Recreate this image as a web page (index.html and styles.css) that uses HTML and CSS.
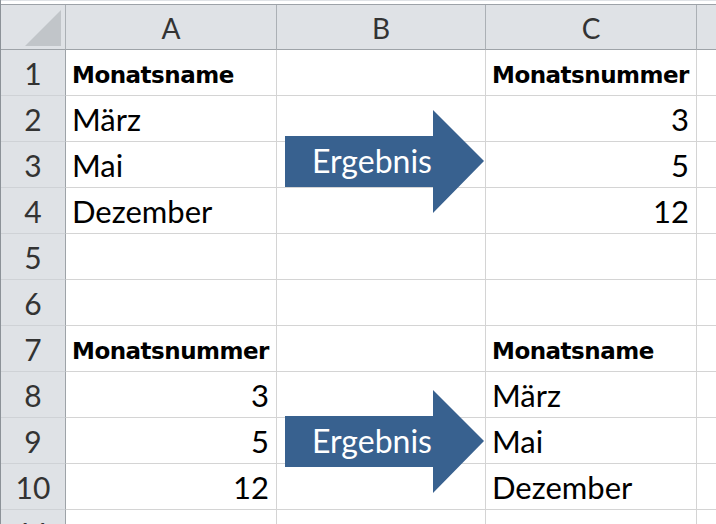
FILE: index.html
```html
<!DOCTYPE html>
<html lang="de">
<head>
<meta charset="utf-8">
<title>Monatsname / Monatsnummer</title>
<link rel="stylesheet" href="styles.css">
</head>
<body>
<div class="sheet">
  <div class="topstrip"></div>
  <div class="grid">
    <div class="corner"><span class="tri"></span></div>
    <div class="colhead">A</div>
    <div class="colhead">B</div>
    <div class="colhead">C</div>
    <div class="colhead last"></div>

    <div class="rowhead">1</div>
    <div class="cell bold">Monatsname</div>
    <div class="cell"></div>
    <div class="cell bold">Monatsnummer</div>
    <div class="cell"></div>

    <div class="rowhead">2</div>
    <div class="cell">März</div>
    <div class="cell"></div>
    <div class="cell num">3</div>
    <div class="cell"></div>

    <div class="rowhead">3</div>
    <div class="cell">Mai</div>
    <div class="cell"></div>
    <div class="cell num">5</div>
    <div class="cell"></div>

    <div class="rowhead">4</div>
    <div class="cell">Dezember</div>
    <div class="cell"></div>
    <div class="cell num">12</div>
    <div class="cell"></div>

    <div class="rowhead">5</div>
    <div class="cell"></div>
    <div class="cell"></div>
    <div class="cell"></div>
    <div class="cell"></div>

    <div class="rowhead">6</div>
    <div class="cell"></div>
    <div class="cell"></div>
    <div class="cell"></div>
    <div class="cell"></div>

    <div class="rowhead">7</div>
    <div class="cell bold">Monatsnummer</div>
    <div class="cell"></div>
    <div class="cell bold">Monatsname</div>
    <div class="cell"></div>

    <div class="rowhead">8</div>
    <div class="cell num">3</div>
    <div class="cell"></div>
    <div class="cell">März</div>
    <div class="cell"></div>

    <div class="rowhead">9</div>
    <div class="cell num">5</div>
    <div class="cell"></div>
    <div class="cell">Mai</div>
    <div class="cell"></div>

    <div class="rowhead">10</div>
    <div class="cell num">12</div>
    <div class="cell"></div>
    <div class="cell">Dezember</div>
    <div class="cell"></div>

    <div class="rowhead">11</div>
    <div class="cell"></div>
    <div class="cell"></div>
    <div class="cell"></div>
    <div class="cell"></div>
  </div>

  <div class="arrow arrow-top">
    <svg class="arrow-shape" width="200" height="104" viewBox="0 0 200 104">
      <polygon points="0,26 148,26 148,0 199,51 148,103 148,77 0,77"/>
    </svg>
    <span class="arrow-label">Ergebnis</span>
  </div>
  <div class="arrow arrow-bottom">
    <svg class="arrow-shape" width="200" height="104" viewBox="0 0 200 104">
      <polygon points="0,26 148,26 148,0 199,51 148,103 148,77 0,77"/>
    </svg>
    <span class="arrow-label">Ergebnis</span>
  </div>
</div>
</body>
</html>
```

FILE: styles.css
```css
html, body {
  margin: 0;
  padding: 0;
  background: #ffffff;
  overflow: hidden;
}

.sheet {
  position: relative;
  width: 716px;
  height: 524px;
  overflow: hidden;
  border-left: 1px solid #8c9298;
  box-sizing: border-box;
}

.topstrip {
  height: 5px;
  box-sizing: border-box;
  background: #ffffff;
  border-top: 1px solid #dfe2e6;
  border-bottom: 1px solid #9da2a8;
}

.grid {
  display: grid;
  grid-template-columns: 65px 211px 209px 211px 40px;
  grid-template-rows: 45px repeat(11, 46px);
}

.corner,
.colhead,
.rowhead,
.cell {
  box-sizing: border-box;
  overflow: hidden;
}

.corner {
  position: relative;
  background: #dfe2e6;
  border-right: 1px solid #abb0b5;
  border-bottom: 1px solid #9ea3a8;
}

.tri {
  position: absolute;
  left: 24px;
  top: 5px;
  width: 36px;
  height: 36px;
  background: #c1c5c9;
  clip-path: polygon(100% 0, 100% 100%, 0 100%);
}

.colhead {
  background: #dfe2e6;
  border-right: 1px solid #abb0b5;
  border-bottom: 1px solid #9ea3a8;
  font-family: Lato, "Liberation Sans", sans-serif;
  font-size: 28px;
  color: #333333;
  display: flex;
  align-items: center;
  justify-content: center;
  padding-top: 2px;
}

.colhead.last {
  border-right: none;
}

.rowhead {
  background: #dfe2e6;
  border-right: 1px solid #9ea3a8;
  border-bottom: 1px solid #cfd2d6;
  font-family: Lato, "Liberation Sans", sans-serif;
  font-size: 30px;
  color: #333333;
  display: flex;
  align-items: flex-end;
  justify-content: center;
  padding-bottom: 4px;
  line-height: 36px;
}

.cell {
  background: #ffffff;
  border-right: 1px solid #d4d4d4;
  border-bottom: 1px solid #d4d4d4;
  font-family: Lato, "Liberation Sans", sans-serif;
  font-size: 31px;
  color: #000000;
  display: flex;
  align-items: flex-end;
  padding: 0 7px 4px 6px;
  line-height: 36px;
  white-space: nowrap;
}

.cell.num {
  justify-content: flex-end;
}

.cell.bold {
  font-family: "DejaVu Sans", Verdana, sans-serif;
  font-weight: bold;
  font-size: 23px;
  letter-spacing: -0.5px;
  padding-bottom: 5px;
  line-height: 30px;
}

.arrow {
  position: absolute;
  left: 284px;
  width: 200px;
  height: 104px;
}

.arrow-top {
  top: 110px;
}

.arrow-bottom {
  top: 390px;
}

.arrow-shape {
  position: absolute;
  left: 0;
  top: 0;
  fill: #38618f;
}

.arrow-label {
  position: absolute;
  left: 0;
  top: 26px;
  width: 174px;
  height: 51px;
  display: flex;
  align-items: center;
  justify-content: center;
  font-family: Lato, "Liberation Sans", sans-serif;
  font-size: 32px;
  color: #ffffff;
  padding-bottom: 2px;
  box-sizing: border-box;
}
```
